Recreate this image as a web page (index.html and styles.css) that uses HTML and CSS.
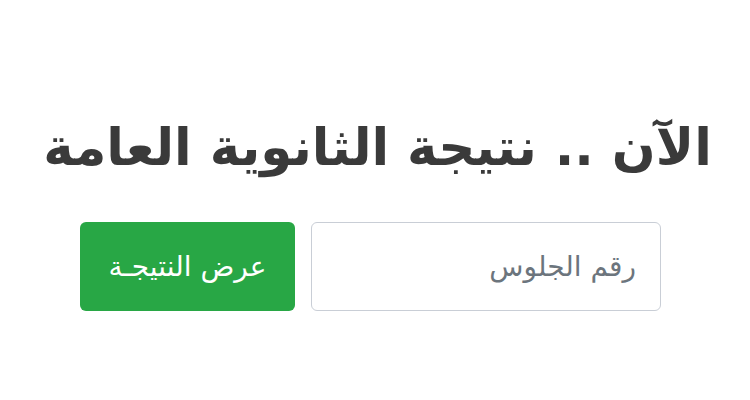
FILE: index.html
```html
<!DOCTYPE html>
<html lang="ar" dir="rtl">
<head>
<meta charset="utf-8">
<link rel="stylesheet" href="styles.css">
</head>
<body>
<main class="page">
  <h1 class="title">الآن .. نتيجة الثانوية العامة</h1>
  <form class="search">
    <input class="seat" type="text" placeholder="رقم الجلوس">
    <button class="show" type="button">عرض النتيجـة</button>
  </form>
</main>
</body>
</html>
```
FILE: styles.css
```css
html, body {
  margin: 0;
  padding: 0;
  background: #fff;
  width: 750px;
  height: 400px;
  overflow: hidden;
}
.page {
  display: flex;
  flex-direction: column;
  align-items: center;
  padding-top: 105px;
  font-family: "DejaVu Sans", "Noto Sans Arabic", sans-serif;
}
.title {
  margin: 0 0 0 5px;
  font-size: 51.5px;
  font-weight: bold;
  color: #3a3a3a;
  line-height: 84px;
}
.search {
  display: flex;
  gap: 16px;
  margin-top: 33px;
  margin-right: 9px;
}
.seat {
  box-sizing: border-box;
  width: 350px;
  height: 89px;
  border: 1.5px solid #c9ced6;
  border-radius: 6px;
  padding: 0 24px;
  font-family: inherit;
  font-size: 28px;
  color: #495057;
  direction: rtl;
  outline: none;
}
.seat::placeholder {
  color: #6c757d;
}
.show {
  box-sizing: border-box;
  width: 215px;
  height: 89px;
  border: none;
  border-radius: 6px;
  background: #28a745;
  color: #fff;
  font-family: inherit;
  font-size: 28px;
  padding: 0;
  cursor: pointer;
}
```
